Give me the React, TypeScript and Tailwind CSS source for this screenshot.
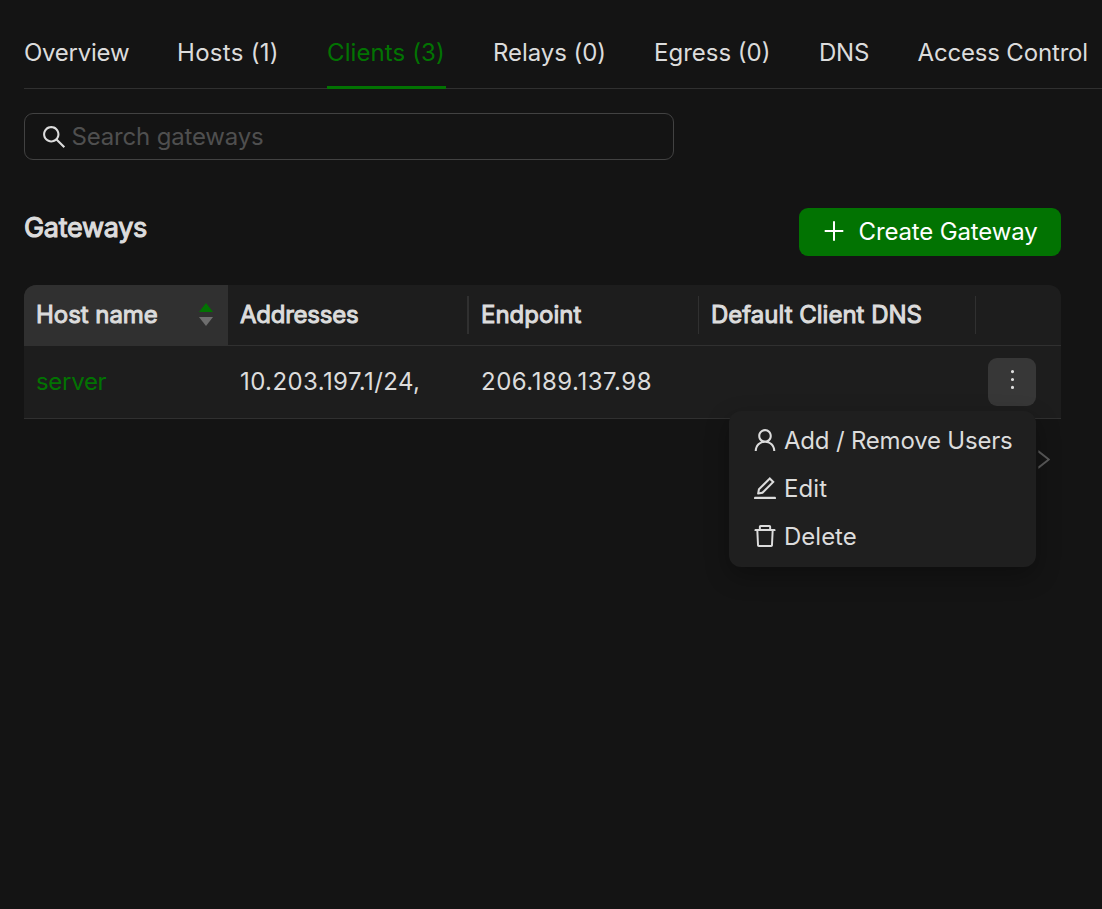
import { AiOutlineDelete, AiOutlineEdit, AiOutlineMore, AiOutlineRight, AiOutlineSearch, AiOutlineUser } from "react-icons/ai";

const tabs = [
  { label: "Overview", style: "w-[105px] tracking-[-0.25px]" },
  { label: "Hosts (1)", style: "w-[102px] tracking-[0.3px]" },
  { label: "Clients (3)", style: "w-[118px] tracking-[0.1px]", active: true },
  { label: "Relays (0)", style: "w-[113px] tracking-[-0.05px]" },
  { label: "Egress (0)", style: "w-[117px]" },
  { label: "DNS", style: "w-[50.5px] tracking-[-0.2px]" },
  { label: "Access Control", style: "w-[171px] tracking-[-0.17px]" },
];

const menu = [
  { label: "Add / Remove Users", style: "tracking-[-0.2px]", Icon: AiOutlineUser },
  { label: "Edit", style: "tracking-[0.1px]", Icon: AiOutlineEdit },
  { label: "Delete", style: "tracking-normal", Icon: AiOutlineDelete },
];

function Tabs() {
  return (
    <nav className="ml-6 flex h-[89px] gap-12 border-b border-[#303030] pt-[18px]">
      {tabs.map((tab) => (
        <div
          key={tab.label}
          className={`-mb-px h-[71px] shrink-0 whitespace-nowrap pt-[17px] ${tab.style} ${
            tab.active ? "text-[#027302]" : ""
          }`}
        >
          {tab.label}
          {tab.active && <div className="mt-[15px] h-[3px] w-[119px] bg-[#027302]" />}
        </div>
      ))}
    </nav>
  );
}

function Sorter() {
  return (
    <svg width="14" height="23" viewBox="0 0 14 23" className="mb-0.5">
      <path d="M7 0 L14 9 H0 Z" fill="#027302" />
      <path d="M0 14 H14 L7 23 Z" fill="#6e6e6e" />
    </svg>
  );
}

function GatewayTable() {
  return (
    <div className="w-[1037px] overflow-hidden rounded-t-xl bg-[#1d1d1d]">
      <div className="flex h-[61px] leading-[60px] [-webkit-text-stroke:1px_#dcdcdc]">
        <div className="flex w-[204px] items-center justify-between bg-[#303030] pl-3 pr-[15.5px] [&>svg]:[stroke:none]">
          <span className="pb-0.5 tracking-[-0.05px]">Host name</span>
          <Sorter />
        </div>
        <div className="flex flex-1 items-center border-b border-[#303030]">
          <div className="w-[239px] pl-3 tracking-[-0.25px]">Addresses</div>
          <div className="h-[38px] w-0.5 bg-[#303030]" />
          <div className="w-[229px] pl-3">Endpoint</div>
          <div className="h-[38px] w-px bg-[#303030]" />
          <div className="w-[276px] pl-3">Default Client DNS</div>
          <div className="h-[38px] w-px bg-[#303030]" />
        </div>
      </div>
      <div className="flex h-[73px] items-center border-b border-[#303030]">
        <div className="w-[204px] pl-3 tracking-[-0.3px] text-[#027302]">server</div>
        <div className="w-[241px] pl-3 tracking-[0.4px]">10.203.197.1/24,</div>
        <div className="flex-1 pl-3 tracking-[0.5px]">206.189.137.98</div>
        <button className="mr-[25px] flex h-12 w-12 items-center justify-center rounded-[9px] bg-[#373737] pb-[5px]">
          <AiOutlineMore size={29} />
        </button>
      </div>
    </div>
  );
}

export default function App() {
  return (
    <div className="min-h-screen w-full overflow-hidden bg-[#141414] font-['Inter',sans-serif] text-[24px] leading-9 text-[#dcdcdc]">
      <Tabs />
      <main className="px-6 pt-6">
        <div className="flex h-[47px] w-[650px] items-center rounded-[9px] border border-[#424242] pl-[15px]">
          <AiOutlineSearch size={28} className="mt-px" />
          <span className="ml-[3.5px] tracking-[-0.18px] text-[#4f4f4f]">Search gateways</span>
        </div>
        <div className="mt-12 flex w-[1037px] justify-between">
          <h1 className="pt-0.5 text-[27px] tracking-[-0.3px] [-webkit-text-stroke:1.1px_#dcdcdc]">Gateways</h1>
          <button className="flex h-12 w-[262px] items-center rounded-[9px] bg-[#027302] pl-[25px] text-white">
            <svg width="20" height="20" viewBox="0 0 20 20" stroke="currentColor" strokeWidth="2" className="mb-0.5">
              <path d="M10 0.3 V19.7 M0.7 10 H19.3" />
            </svg>
            <span className="ml-[14.5px] whitespace-nowrap tracking-[-0.14px]">Create Gateway</span>
          </button>
        </div>
        <div className="relative mt-[29px]">
          <GatewayTable />
          <div className="flex w-[1032px] justify-end pt-7 text-[#5a5a5a]">
            <AiOutlineRight size={25} />
          </div>
          <div className="absolute left-[705px] top-[126px] flex h-[156px] w-[307px] flex-col rounded-xl bg-[#1f1f1f] p-1.5 shadow-[0_9px_24px_rgba(0,0,0,0.3)]">
            {menu.map(({ label, style, Icon }) => (
              <div key={label} className="flex h-12 items-center whitespace-nowrap pl-4">
                <Icon size={28} className="mb-0.5" />
                <span className={`ml-[5px] ${style}`}>{label}</span>
              </div>
            ))}
          </div>
        </div>
      </main>
    </div>
  );
}
